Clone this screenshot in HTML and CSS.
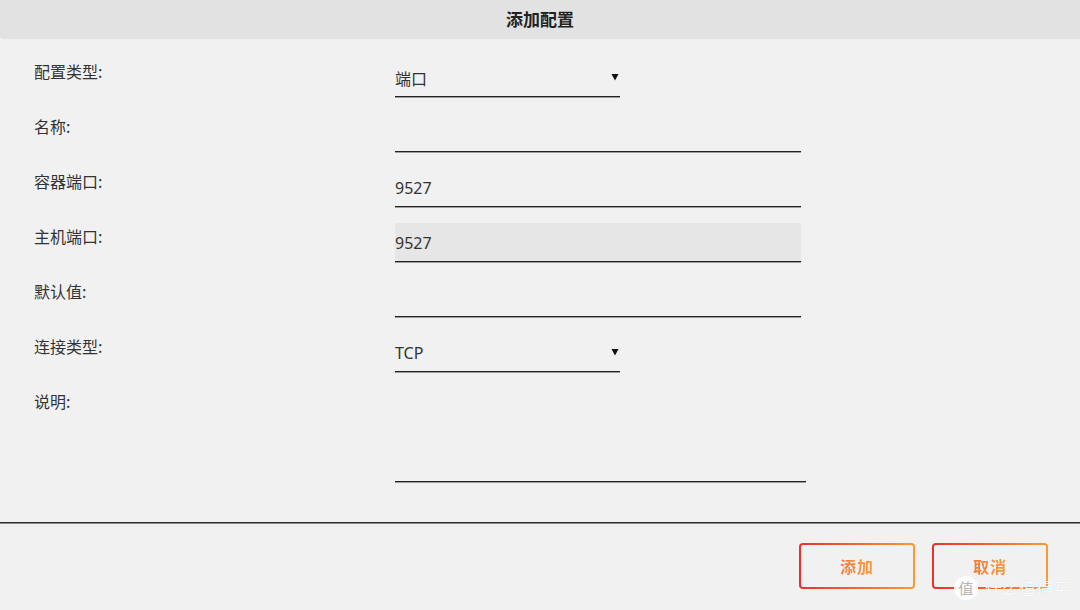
FILE: index.html
```html
<!DOCTYPE html>
<html lang="zh-CN">
<head>
<meta charset="utf-8">
<title>添加配置</title>
<link rel="stylesheet" href="styles.css">
</head>
<body>
<div class="dialog">
  <header class="dialog-head">添加配置</header>

  <div class="form">
    <div class="row">
      <div class="label">配置类型:</div>
      <div class="field select">
        <span>端口</span>
        <svg class="caret" width="8" height="8" viewBox="0 0 8 8"><polygon points="0.5,1 7.5,1 4,7.5" fill="#111"/></svg>
      </div>
    </div>
    <div class="row">
      <div class="label">名称:</div>
      <div class="field wide"></div>
    </div>
    <div class="row">
      <div class="label">容器端口:</div>
      <div class="field wide"><span class="num">9527</span></div>
    </div>
    <div class="row">
      <div class="label">主机端口:</div>
      <div class="field wide disabled"><span class="num">9527</span></div>
    </div>
    <div class="row">
      <div class="label">默认值:</div>
      <div class="field wide"></div>
    </div>
    <div class="row">
      <div class="label">连接类型:</div>
      <div class="field select">
        <span class="num">TCP</span>
        <svg class="caret" width="8" height="8" viewBox="0 0 8 8"><polygon points="0.5,1 7.5,1 4,7.5" fill="#111"/></svg>
      </div>
    </div>
    <div class="row row-area">
      <div class="label">说明:</div>
      <div class="field area"></div>
    </div>
  </div>

  <div class="divider"></div>

  <footer class="actions">
    <button class="btn"><span>添加</span></button>
    <button class="btn"><span>取消</span></button>
  </footer>

  <div class="mark">
    <span class="mark-logo">值</span>
    <span class="mark-text">什么值得买</span>
  </div>
</div>
</body>
</html>
```

FILE: styles.css
```css
* {
  box-sizing: border-box;
}

html, body {
  margin: 0;
  padding: 0;
  background: #f1f1f1;
}

body {
  font-family: "Noto Sans", "Noto Sans CJK SC", sans-serif;
  color: #333;
  width: 1080px;
  height: 610px;
  overflow: hidden;
}

.dialog {
  position: relative;
  height: 610px;
}

.dialog-head {
  height: 38px;
  line-height: 38px;
  background: #e2e2e2;
  border-bottom-left-radius: 4px;
  box-shadow: 0 1px 1px rgba(0, 0, 0, 0.06);
  text-align: center;
  font-family: "Noto Sans CJK SC", sans-serif;
  font-size: 17px;
  font-weight: 700;
  color: #222;
}

.form {
  padding: 20px 0 0 34px;
}

.row {
  display: grid;
  grid-template-columns: 361px auto;
  height: 55px;
}

.row-area {
  height: 94px;
}

.label {
  padding-top: 3px;
  line-height: 20px;
  font-family: "Noto Sans CJK SC", sans-serif;
  font-size: 16px;
  color: #333;
}

.field {
  height: 39px;
  display: flex;
  align-items: center;
  padding-top: 1px;
  border-bottom: 1px solid #222;
  box-shadow: 0 1px 0 rgba(0, 0, 0, 0.35);
  font-family: "Noto Sans CJK SC", sans-serif;
  font-size: 16px;
  color: #333;
}

.field .num {
  font-family: "Noto Sans", sans-serif;
  font-size: 16px;
}

.select {
  width: 225px;
  justify-content: space-between;
  padding-right: 1px;
}

.caret {
  display: block;
  margin-top: -2px;
}

.wide {
  width: 406px;
}

.disabled {
  background: #e6e6e6;
}

.area {
  width: 411px;
  height: 94px;
}

.divider {
  margin-top: 40px;
  height: 2px;
  background: linear-gradient(#2b2b2b 50%, #8a8a8a 50%);
}

.actions {
  display: flex;
  justify-content: flex-end;
  gap: 17px;
  padding: 19px 32px 0 0;
}

.btn {
  width: 116px;
  height: 46px;
  border: 2px solid transparent;
  border-radius: 4px;
  background:
    linear-gradient(#f1f1f1, #f1f1f1) padding-box,
    linear-gradient(90deg, #e9302e, #fb9a30) border-box;
  font-family: "Noto Sans CJK SC", sans-serif;
  font-size: 16px;
  line-height: 20px;
  font-weight: 700;
  cursor: pointer;
  padding: 0;
}

.btn span {
  background: linear-gradient(90deg, #f47a38, #f99c3c);
  -webkit-background-clip: text;
  background-clip: text;
  color: transparent;
  letter-spacing: 1px;
}

/* site watermark over the bottom-right corner */
.mark {
  position: absolute;
  right: 10px;
  bottom: 10px;
  height: 24px;
  display: flex;
  align-items: center;
  gap: 7px;
  pointer-events: none;
}

.mark-logo {
  width: 24px;
  height: 24px;
  border-radius: 50%;
  background: rgba(255, 255, 255, 0.92);
  color: #b5b5b5;
  font-family: "Noto Sans CJK SC", sans-serif;
  font-size: 15px;
  line-height: 24px;
  text-align: center;
}

.mark-text {
  font-family: "Noto Sans CJK SC", sans-serif;
  font-size: 17px;
  line-height: 18px;
  color: rgba(255, 255, 255, 0.9);
  text-shadow: 0 0 1px rgba(0, 0, 0, 0.12);
}
```
